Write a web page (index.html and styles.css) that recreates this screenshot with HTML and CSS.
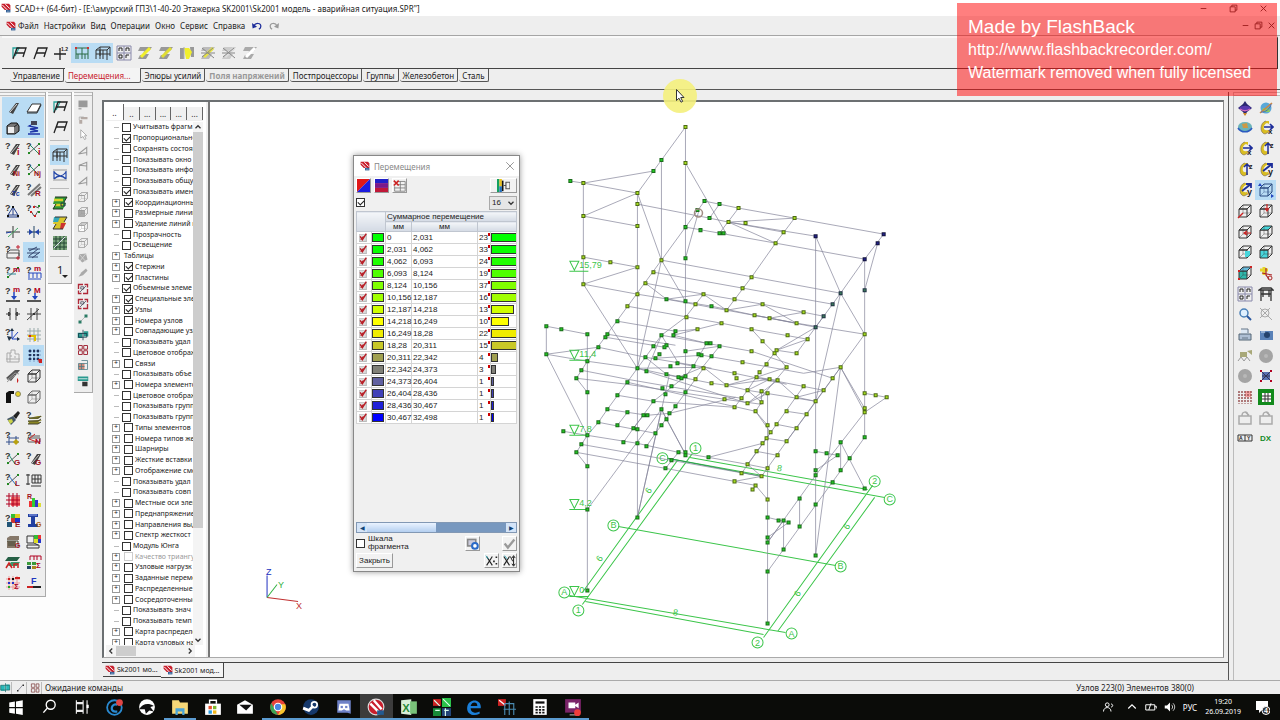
FILE: index.html
```html
<!DOCTYPE html>
<html lang="ru">
<head>
  <meta charset="UTF-8" />
  <meta name="viewport" content="width=device-width, initial-scale=1" />
  <title>SCAD++ (64-бит)</title>
  <link rel="stylesheet" href="styles.css">
</head>
<body>

  <header class="titlebar">
    <svg class="logo" data-icon="scad"></svg>
    <h1>SCAD++ (64-бит) - [E:\амурский ГПЗ\1-40-20 Этажерка SK2001\Sk2001 модель - аварийная ситуация.SPR"]</h1>
    <div class="win-buttons">
      <button aria-label="Свернуть"><svg data-icon="min"></svg></button>
      <button aria-label="Развернуть"><svg data-icon="restore"></svg></button>
      <button aria-label="Закрыть окно"><svg data-icon="close"></svg></button>
    </div>
  </header>

  <nav class="menubar">
    <svg class="logo" data-icon="scad"></svg>
    <button>Файл</button>
    <button>Настройки</button>
    <button>Вид</button>
    <button>Операции</button>
    <button>Окно</button>
    <button>Сервис</button>
    <button>Справка</button>
    <button class="arrow" aria-label="Отменить"><svg data-icon="undo"></svg></button>
    <button class="arrow" aria-label="Вернуть"><svg data-icon="redo"></svg></button>
    <div class="mdi-buttons">
      <button aria-label="Свернуть документ"><svg data-icon="min"></svg></button>
      <button aria-label="Восстановить документ"><svg data-icon="restore"></svg></button>
      <button aria-label="Закрыть документ"><svg data-icon="close"></svg></button>
    </div>
  </nav>

  <div class="toolbar" id="topBar"></div>

  <nav class="tabs">
    <button>Управление</button>
    <button class="current">Перемещения...</button>
    <button>Эпюры усилий</button>
    <button disabled>Поля напряжений</button>
    <button>Постпроцессоры</button>
    <button>Группы</button>
    <button>Железобетон</button>
    <button>Сталь</button>
  </nav>

  <div class="workspace">
    <div class="side">
      <div class="bar bar-main" id="mainBar"></div>
      <div class="bar bar-view" id="viewBar"></div>
      <div class="bar bar-small" id="smallBar"></div>
    </div>

    <div class="documents">
      <div class="doc">
        <aside class="filters">
          <div class="filter-tabs">
            <button class="current">..</button>
            <button>..</button>
            <button>...</button>
            <button>...</button>
            <button>...</button>
            <button>...</button>
          </div>
          <div class="filter-body">
            <ul class="tree" id="tree"></ul>
            <div class="vscroll">
              <svg data-icon="up"></svg>
              <div class="thumb"></div>
              <svg data-icon="down"></svg>
            </div>
          </div>
          <div class="hscroll">
            <svg data-icon="left"></svg>
            <div class="thumb"></div>
            <svg data-icon="right"></svg>
          </div>
        </aside>

        <main class="canvas">
          <svg class="model" id="model" viewBox="210 102 1012 555" preserveAspectRatio="xMinYMin slice"></svg>

          <section class="dialog">
            <div class="dialog-title">
              <svg class="logo" data-icon="scad"></svg>
              <h2>Перемещения</h2>
              <button aria-label="Закрыть панель"><svg data-icon="thinclose"></svg></button>
            </div>
            <div class="dialog-row">
              <button class="push" aria-label="Изополя"><svg data-icon="diag"></svg></button>
              <button class="push" aria-label="Градиент"><svg data-icon="grad"></svg></button>
              <button class="push" aria-label="Сброс"><svg data-icon="gridx"></svg></button>
              <button class="push wide" aria-label="Настройка шкалы"><svg data-icon="palette"></svg></button>
            </div>
            <div class="dialog-row">
              <input type="checkbox" class="check" aria-label="Все интервалы" checked />
              <div class="select">
                <select aria-label="Количество интервалов"><option>16</option></select>
                <svg data-icon="down"></svg>
              </div>
            </div>
            <div class="scale">
              <table>
                <colgroup><col class="c-on"><col class="c-color"><col class="c-from"><col class="c-to"><col class="c-count"><col class="c-bar"></colgroup>
                <thead>
                  <tr><th colspan="2" rowspan="2"></th><th colspan="4" class="group">Суммарное перемещение</th></tr>
                  <tr><th>мм</th><th>мм</th><th colspan="2"></th></tr>
                </thead>
                <tbody id="scaleRows"></tbody>
              </table>
            </div>
            <div class="blue-scroll">
              <button aria-label="Влево">◀</button>
              <div class="thumb"></div>
              <button aria-label="Вправо">▶</button>
            </div>
            <div class="dialog-row bottom">
              <label class="fragment"><input type="checkbox" class="check" /><span>Шкала фрагмента</span></label>
              <button class="push set" aria-label="Параметры"><svg data-icon="gear"></svg></button>
              <button class="push end" aria-label="Применить"><svg data-icon="ok"></svg></button>
            </div>
            <div class="dialog-row">
              <button class="push text">Закрыть</button>
              <button class="push end" aria-label="Отметить узлы"><svg data-icon="x1"></svg></button>
              <button class="push" aria-label="Отметить элементы"><svg data-icon="x2"></svg></button>
            </div>
          </section>
        </main>
      </div>

      <nav class="doc-tabs">
        <button><svg class="logo" data-icon="scad"></svg>Sk2001 мо...</button>
        <button class="current"><svg class="logo" data-icon="scad"></svg>Sk2001 мод...</button>
      </nav>
    </div>

    <div class="bar bar-right" id="rightBar"></div>
  </div>

  <footer class="status">
    <svg data-icon="s1"></svg>
    <svg data-icon="s2"></svg>
    <svg data-icon="s3"></svg>
    <span>Ожидание команды</span>
    <span class="counts">Узлов 223(0) Элементов 380(0)</span>
  </footer>

  <div class="taskbar">
    <div class="apps" id="apps"></div>
    <div class="tray">
      <svg data-icon="people"></svg>
      <svg data-icon="chevron"></svg>
      <svg data-icon="battery"></svg>
      <svg data-icon="sound"></svg>
      <span>РУС</span>
      <time>19:20<br>26.09.2019</time>
      <svg data-icon="note"></svg>
    </div>
  </div>

  <div class="watermark">
    <p class="big">Made by FlashBack</p>
    <p>http://www.flashbackrecorder.com/</p>
    <p>Watermark removed when fully licensed</p>
  </div>

  <svg class="pointer" viewBox="0 0 36 36">
    <circle cx="18" cy="18" r="17" fill="#f4f07c" fill-opacity=".9" />
    <path d="M14.500 11.500v11l2.500-2.300 2 4 1.700-.8-2-3.900h3.300z" fill="#fff" stroke="#333" />
  </svg>

  <script src="script.js"></script>
</body>
</html>
```

FILE: styles.css
```css
* {
  margin: 0; padding: 0; box-sizing: border-box;
}

body {
  height: 100vh;
  display: flex;
  flex-direction: column;
  overflow: hidden;
  background: #eeeeee;
  color: #222;
  font-family: "Noto Sans", sans-serif;
  font-size: 8px;
}

button {
  border: none;
  background: none;
  font: inherit;
  color: inherit;
}

svg {
  display: block;
  flex: none;
  width: 16px;
  height: 16px;
}

svg.logo { width: 10px; height: 10px; }

/* title and menu */
.titlebar {
  flex: none;
  height: 16px;
  display: flex;
  align-items: center;
  gap: 4px;
  padding-left: 1px;
  background: #fff;
}

h1 { font-size: 8px; font-weight: 400; white-space: nowrap; }

.win-buttons, .mdi-buttons { display: flex; margin-left: auto; }
.win-buttons svg, .mdi-buttons svg { width: 9px; height: 9px; }
.win-buttons { gap: 21px; padding-right: 12px; }
.mdi-buttons { gap: 4px; padding-right: 4px; }

.menubar {
  flex: none;
  height: 20px;
  display: flex;
  align-items: center;
  gap: 5px;
  padding-left: 6px;
  border-bottom: 1px solid #a5a5a5;
}

.menubar .logo { margin-right: -3px; }
.menubar .arrow { margin-left: 2px; }
.menubar .arrow svg { width: 10px; height: 10px; }

.toolbar {
  flex: none;
  height: 33px;
  display: flex;
  align-items: center;
  padding: 0 0 0 6px;
  margin: 0 2px;
  border-bottom: 1px solid #444;
  border-right: 1px solid #333;
  border-top: 2px solid #f9f9f9;
}

.toolbar button {
  width: 21px;
  height: 20px;
  display: grid;
  place-items: center;
}

.on { background: #b9dcf4; }

.tabs {
  flex: none;
  height: 21px;
  display: flex;
  align-items: flex-start;
  gap: 1px;
  padding-left: 10px;
  border-bottom: 1px solid #555;
}

.tabs button {
  height: 13px;
  padding: 0 3px;
  border-right: 1px solid #555;
  border-bottom: 1px solid #555;
  border-radius: 0 0 2px 3px;
  white-space: nowrap;
}

.tabs .current {
  height: 15px;
  margin-top: -1px;
  padding-right: 9px;
  background: #f4f4f4;
  color: #c8202c;
}

.tabs button:disabled { color: #999; font-weight: 700; }

/* workspace */
.workspace {
  flex: 1;
  min-height: 0;
  display: flex;
  padding-top: 2px;
}

.side {
  width: 93px;
  display: flex;
  align-items: flex-start;
  gap: 2px;
  background: #fdfdfd;
}

.bar {
  display: grid;
  padding-top: 5px;
  background: #eee;
  border-right: 1px solid #aaa;
  border-bottom: 1px solid #aaa;
  box-shadow: inset 0 1px #bbb, inset 0 3px #f4f4f4, inset 0 4px #bbb;
}

.bar button { display: grid; place-items: center; }

.bar-main {
  width: 46px;
  padding-left: 2px;
  padding-bottom: 3px;
  grid-template-columns: 21px 21px;
  grid-template-rows: repeat(8, 21px 20px 21px);
}

.bar-view {
  width: 24px;
  padding: 5px 2px 2px;
}

.bar-view button { height: 20px; }
.bar-view .line { height: 24px; margin-bottom: 4px; padding-bottom: 3px; border-bottom: 1px solid #bbb; }

.bar-small {
  width: 19px;
  padding-bottom: 3px;
  grid-template-rows: repeat(6, 15px 15px 16px) 16px;
}

.bar-small svg { width: 12px; height: 12px; }

.bar-right {
  width: 47px;
  margin-left: 4px;
  grid-template-columns: 21px 21px;
  grid-template-rows: repeat(6, 21px 20px 21px);
  align-content: start;
  border: none;
  border-left: 1px solid #bbb;
}

.documents {
  flex: 1;
  min-width: 0;
  display: flex;
  flex-direction: column;
  padding: 8px 0 0 9px;
  border-right: 1px solid #555;
}

.doc {
  flex: 1;
  min-height: 0;
  display: flex;
  margin-right: 4px;
  background: #fff;
  border: 2px solid #6c7072;
  border-right: 1px solid #888;
  border-bottom: 1px solid #aaa;
}

.filters {
  width: 106px;
  display: flex;
  flex-direction: column;
  padding: 3px 5px 0 2px;
  background: #fff;
  border-right: 2px solid #777;
  box-shadow: inset -2px 0 #eee;
}

.filter-tabs { display: flex; height: 16px; align-items: flex-end; border-bottom: 1px solid #eee; }
.filter-tabs button { flex: 1; height: 13px; background: #f0f0f0; border-right: 1px solid #666; }
.filter-tabs .current { flex: 0 0 18px; height: 16px; background: #fff; }

.filter-body { flex: 1; min-height: 0; display: flex; overflow: hidden; padding-top: 1px; }

.tree {
  flex: 1;
  min-width: 0;
  display: grid;
  grid-auto-rows: minmax(0, 1fr);
  margin-bottom: -3px;
  list-style: none;
  font-size: 7px;
}

.tree li {
  display: flex;
  align-items: center;
  white-space: nowrap;
  line-height: 10px;
}

.tree li::before {
  content: "";
  flex: none;
  width: 5px;
  height: 1px;
  margin: 0 3px 0 8px;
  background: #bbb;
}

.tree li.plus::before {
  content: "+";
  width: 6px;
  height: 6px;
  margin: 0 4px 0 6px;
  border: 1px solid #999;
  background: #fff;
  font-size: 7px;
  line-height: 4px;
  text-align: center;
}

.tree label { display: flex; align-items: center; gap: 2px; }
.tree .off { color: #999; }

.check {
  appearance: none;
  flex: none;
  width: 9px;
  height: 9px;
  background: #fff;
  border: 1px solid #333;
}

.check:checked::after {
  content: "";
  display: block;
  width: 5px;
  height: 3px;
  margin: 1px;
  border-left: 1px solid #222;
  border-bottom: 1px solid #222;
  transform: rotate(-45deg);
}

.check:disabled { border-color: #ccc; }

.vscroll { width: 10px; display: flex; flex-direction: column; background: #f4f4f4; }
.vscroll svg, .hscroll svg { width: 10px; height: 10px; }
.vscroll .thumb { flex: 0 1 396px; background: #cdcdcd; margin-bottom: auto; }
.hscroll { display: flex; align-items: center; height: 12px; margin-right: 8px; background: #f4f4f4; }
.hscroll .thumb { width: 20px; height: 10px; margin-right: auto; background: #cdcdcd; }

.canvas { flex: 1; min-width: 0; position: relative; background: #fff; overflow: hidden; }
.model { width: 100%; height: 100%; font-family: "Liberation Sans", sans-serif; font-size: 9px; }

/* displacement scale window, floats over the model */
.dialog {
  position: absolute;
  left: 143px;
  top: 53px;
  width: 167px;
  height: 417px;
  display: flex;
  flex-direction: column;
  padding: 0 2px 2px;
  background: #f0f0f0;
  border: 1px solid #888;
  box-shadow: 0 0 6px rgba(0, 0, 0, 0.4);
  font-family: "Liberation Sans", sans-serif;
}

.dialog-title {
  display: flex;
  align-items: center;
  gap: 4px;
  height: 20px;
  margin: 0 -2px 1px;
  padding: 0 4px 0 6px;
  background: #fff;
  color: #888;
}

.dialog-title h2 { font-family: "Noto Sans", sans-serif; font-size: 8px; font-weight: 400; margin-right: auto; }
.dialog-title svg { width: 10px; height: 10px; }

.dialog-row { display: flex; align-items: center; gap: 3px; height: 17px; }

.push {
  width: 15px;
  height: 15px;
  display: grid;
  place-items: center;
  background: #f2f2f2;
  border: 1px solid #fff;
  border-right-color: #999;
  border-bottom-color: #999;
}

.push svg { width: 13px; height: 13px; }
.push.wide { width: 27px; margin-left: auto; }
.push.end { margin-left: auto; }
.push.text { width: 37px; }

.select {
  display: flex;
  align-items: center;
  width: 28px;
  height: 14px;
  margin-left: auto;
  border: 1px solid #aaa;
  background: #e6e6e6;
}

.select select {
  appearance: none;
  flex: 1;
  min-width: 0;
  padding-left: 2px;
  border: none;
  background: none;
  color: #222;
  font: inherit;
}

.select svg { width: 10px; height: 10px; }

.scale { flex: 1; min-height: 0; overflow: hidden; }

table { width: 100%; table-layout: fixed; border-collapse: collapse; background: #fff; }
.c-on { width: 15px; }
.c-color { width: 14px; }
.c-from { width: 26px; }
.c-to { width: 66px; }
.c-count { width: 13px; }

th {
  height: 10px;
  font-weight: 400;
  line-height: 9px;
  background: linear-gradient(#f4f6f9, #d3dae4);
  border: 1px solid #c0c6d0;
}

th.group { text-align: left; padding-left: 1px; white-space: nowrap; }

td {
  height: 12px;
  padding: 0 0 0 1px;
  line-height: 10px;
  border: 1px solid #d4d4d4;
  white-space: nowrap;
}

td:nth-child(2), td:last-child { padding: 0; overflow: hidden; }
td svg { width: 9px; height: 9px; margin-left: 1px; }
td:nth-child(5) { background: radial-gradient(#c00 0 0) no-repeat 10px 1px / 2px 3px; }

.swatch, .bar-fill { display: block; height: 9px; border: 1px solid #333; }
.swatch { width: 12px; }

.blue-scroll { display: flex; height: 11px; margin-bottom: 1px; background: #7898bf; border: 1px solid #8298b4; }
.blue-scroll button { width: 10px; background: #d4e4f8; color: #147; font-size: 6px; line-height: 8px; }
.blue-scroll .thumb { width: 69px; margin-right: auto; background: linear-gradient(#eaf3ff, #b4cff0); }
.fragment { display: flex; align-items: center; gap: 3px; width: 106px; line-height: 8px; }
.fragment span { width: 44px; }
.dialog-row.bottom { height: 18px; }

.doc-tabs {
  height: 18px;
  display: flex;
  align-items: flex-start;
  margin-top: 4px;
  padding-left: 1px;
  border-top: 1px solid #444;
}

.doc-tabs button {
  display: flex;
  align-items: center;
  gap: 2px;
  height: 14px;
  padding: 0 3px 0 2px;
  border-bottom: 1px solid #444;
  font-size: 7px;
  white-space: nowrap;
}

.doc-tabs .current { height: 15px; border-right: 1px solid #444; background: #f4f4f4; }

.status {
  flex: none;
  height: 14px;
  display: flex;
  align-items: center;
  gap: 3px;
  border-top: 1px solid #aaa;
}

.status svg { width: 12px; height: 12px; border-right: 1px solid #bbb; }
.status .counts { margin-left: auto; padding-right: 86px; }

/* taskbar */
.taskbar {
  flex: none;
  height: 26px;
  display: flex;
  background: #0b0c09;
  color: #fff;
}

.apps { width: 589px; display: flex; }
.apps button { flex: 1; display: grid; place-items: center; border-bottom: 2px solid transparent; padding-top: 1px; }
.apps .run { border-bottom-color: #5b9bd0; }
.apps .active { background: #3c3c3c; }
.apps svg { width: 18px; height: 18px; }

.tray { display: flex; align-items: center; gap: 7px; margin-left: auto; padding-right: 10px; }
.tray svg { width: 12px; height: 12px; }
.tray svg:first-child { margin-right: 5px; }
.tray time { margin: 0 6px 0 1px; text-align: center; font-size: 7px; line-height: 10px; }
.tray svg:last-child { width: 16px; height: 16px; }

/* recorder overlay */
.watermark {
  position: absolute;
  top: 3px;
  right: 3px;
  width: 320px;
  height: 93px;
  padding: 12px 11px;
  background: rgba(255, 0, 0, 0.5);
  color: #fff;
  font: 16px/23px "Liberation Sans", sans-serif;
  white-space: nowrap;
}

.watermark .big { font-size: 19px; }

.pointer { position: absolute; left: 662px; top: 78px; width: 36px; height: 36px; }
```

FILE: script.js
```js
// small helpers for svg fragments
const p = (d, c = "#222", w = 1) => `<path d="${d}" fill="none" stroke="${c}" stroke-width="${w}"/>`;
const f = (d, c = "#222") => `<path d="${d}" fill="${c}"/>`;
const t = (x, y, s, c = "#222", size = 7) =>
  `<text x="${x}" y="${y}" fill="${c}" font-size="${size}" font-weight="bold" font-family="Liberation Sans, sans-serif">${s}</text>`;
const q = t(0, 8, "?", "#333", 9);
const node = (x, y, c) => f(`M${x - 1} ${y - 1}h2v2h-2z`, c);

const beam = f("M5 12L11 3h4L9 14z", "#444") + p("M6 12l7-8", "#ccc");
const cube = (c = "#333", face = "none", face2 = "none") =>
  `<path d="M2 6h8v8h-8z" fill="${face}" stroke="${c}"/><path d="M2 6l4-4h8l-4 4z" fill="${face2}" stroke="${c}"/>` + p("M14 2v8l-4 4", c) + p("M6 2v8h8M6 10l-4 4", c, .4);
const cross = p("M2 13L13 3", "#555") + node(3, 12, "#282") + node(13, 3, "#282");
const ring = f("M8 1C2 2 1 13 7 14l4-2-1-2c-5 2-6-5-1-7l2 1V1z", "#d9bd22") + p("M8 1C2 2 1 13 7 14l4-2", "#765", .6);
const portal = p("M2 14L6 3h9l-3 9M6 3L4 9M4 8h9", "#222", 1.3);
const sheet = (a, b) => f("M3 2h12l-3 4h-4l-1 3h5l-3 5H1l2-4h3l1-4H1z", a) + p("M4 12l9-9", b, 3);
const win4 = p("M1 1h14v14H1zM1 8h14M8 1v14", "#88a") + p("M3 6V3h3v3M10 6V3h3v3M3 10h3v3H3zM10 13v-3h3", "#222");
const frame3 = p("M1 5l4-3h10l-3 3zM1 5v9M12 5v10M15 2v9M5 2v9M5 5v9M8 5v9M1 9h14", "#333");
const grid = c => p("M1 4h14M1 8h14M1 12h14M4 1v14M8 1v14M12 1v14", c);

const icons = {
  scad: f("M1 1h12l2 3v7H6L1 6z", "#c81e2c") + p("M2 3l9 9M7 2l7 7", "#fff", 1.6) + f("M8 11h7v4H8z", "#1f4f8a") + p("M9 13h5", "#cde"),
  min: p("M3 8h10", "#333", 1.5),
  restore: p("M2 5h9v9H2zM5 5V2h9v9h-3", "#333", 1.5),
  close: p("M3 3l10 10M13 3L3 13", "#333", 1.6),
  thinclose: p("M2 2l12 12M14 2L2 14", "#777", 1.2),
  undo: p("M3 8c3-6 12-5 11 1 0 2-1 3-3 4", "#1b2b9a", 2) + f("M0 3l1 9 7-3z", "#1b2b9a"),
  redo: p("M13 8C10 2 1 3 2 9c0 2 1 3 3 4", "#999", 2) + f("M16 3l-1 9-7-3z", "#999"),
  portalT: p("M2 13V3h6l-4 8", "#2aa39a", 1.3) + portal,
  portal,
  axis: p("M1 9h12M7 3v12", "#222", 1.3) + t(8, 6, "1.2", "#222", 5),
  frames: p("M1 3h14M2 3v11M8 3v11M14 3v11M2 9h12M4 9v5M11 9v5", "#2b6a45") + node(2, 3, "#c33") + node(14, 3, "#c33"),
  frame3, win4,
  sh1: sheet("#999", "#f1ef2c"), sh2: sheet("#999", "#e0dd33"),
  sh3: f("M1 3h4v11H1zM11 2h4v10h-3z", "#999") + f("M5 3h5l3 4-3 7H7z", "#f1ef2c") + p("M5 2v12", "#aaa"),
  sh4: sheet("#bbb", "#e8e540") + p("M2 3l12 10M2 12L13 3M1 8h14", "#888"),
  sh5: sheet("#ccc", "#ddd") + p("M2 3l12 10M2 12L13 3M1 8h13", "#888"), sh6: sheet("#aaa", "#fff"),
  // main bar
  bar: f("M4 12L11 3h3L8 14z", "#444") + p("M5 12l7-8", "#ddd"),
  plate: `<path d="M1 12L6 4h9l-4 8z" fill="#fff" stroke="#333"/>` + p("M1 13h10l4-8", "#333"),
  solid: `<path d="M2 6l4-3h6l2 3v5l-4 3H2z" fill="#777" stroke="#111"/>` + f("M3 7h6v6H3z", "#eee") + p("M9 7l4-3", "#222"),
  spring: p("M5 5l-2 1 9 2-8 1 8 2-8 1M2 14h12", "#2036a8", 1.3) + f("M5 1h6v4H5z", "#445"),
  qi: q + beam + t(12, 14, "i", "#b00020", 9), qxi: q + cross + p("M4 4l9 9", "#2a8a6a") + t(12, 14, "i", "#b00020", 9),
  qn: q + beam + t(8, 14, "Ni", "#a01020", 7), qnj: q + cross + p("M4 4l9 9", "#2a8a6a") + t(8, 14, "Nj", "#a01020", 7),
  qt: q + beam + t(7, 14, "Тс", "#203c9c", 7), qr: q + p("M2 13L14 2M5 14L15 5", "#777", 2) + t(9, 14, "R", "#a01020", 8),
  qsup: q + p("M8 4l-5 8h10zM2 14h12M8 4v8", "#24408c") + node(8, 4, "#111") + node(3, 13, "#111") + node(13, 13, "#111"),
  qlink: q + p("M5 8l3 5M8 3l5 2M12 8l-3 5", "#555") + node(8, 4, "#c22") + node(13, 3, "#282") + node(5, 9, "#c22") + node(9, 13, "#c22") + node(13, 9, "#282"),
  cr1: p("M1 8h14M8 2v12", "#333") + p("M3 13L13 4", "#4a6") + p("M1 9l5-1", "#24a"),
  cr2: p("M1 8h14M8 2v12", "#246") + f("M3 5l4 3-4 3zM13 5l-4 3 4 3z", "#24a"),
  plus1: q + p("M2 9h12v5H2zM2 9l3-3h9v6", "#555") + p("M11 3h4M13 1v4M11 14h4M13 12v4", "#c02030"),
  waves: p("M2 5h12M1 9h12M2 13h10M3 7l8-4M3 12l9-7M6 14l8-6", "#34466f"),
  qm1: q + cross + t(8, 7, "m", "#b00020", 8) + p("M2 9h9", "#2a8a9a"), qm2: q + t(8, 6, "m", "#b00020", 8) + p("M3 8h12v5M3 8v5M7 8v5M11 8v5M2 14h13", "#2346c0"),
  qm3: q + t(8, 6, "m", "#b00020", 8) + p("M9 6v6", "#2346c0", 1.5) + f("M6 10h6l-3 4z", "#2346c0") + p("M1 15h14", "#222", 1.5),
  qm4: q + t(8, 7, "M", "#b00020", 8) + p("M9 7v6", "#2346c0", 1.5) + f("M6 10h6l-3 4z", "#2346c0") + p("M1 15h14", "#222", 1.5),
  dim1: p("M1 8h5M10 8h5M5 2v12M11 2v12", "#444") + p("M4 6v4M12 6v4", "#444", 2),
  dim2: p("M1 8h14M5 2v12M11 2v12M1 14L13 3", "#444") + node(8, 8, "#333"),
  axes: q + p("M7 3v9h7M7 12l6-7", "#2346c0") + f("M5 4l2-3 2 3zM12 10l3 2-3 2zM2 9l5 1-3 4z", "#234"),
  lgrid: grid("#9aa") + p("M2 9h7v5", "#e0c000", 2) + node(4, 9, "#c22"),
  house: p("M2 14V5h4V2h4v4h4v8zM5 8h2M9 9h2M1 11h14M5 5v9", "#aaa"),
  dots: `<path d="M2 3h13M2 7h13M2 11h13M4 1v13M8 1v13M12 1v13" fill="none" stroke="#46669c" stroke-dasharray="1.500 1"/>` + [3, 7, 11].map(y => [4, 8, 12].map(x => node(x, y, "#23355c")).join("")).join("") + f("M12 11h4v4h-3z", "#c22"),
  slab: f("M1 10L10 2h5L6 13z", "#555") + p("M2 12l8-7 4 1M2 14l8-7", "#999") + f("M12 10a3 3 0 010 5z", "#c22"),
  wire: cube("#333"), wire2: cube("#666"),
  lampb: f("M1 4l3-2h5v3H6v9H1z", "#111") + `<circle cx="13" cy="5" r="2.500" fill="#e8d222" stroke="#886"/>`,
  brush: f("M2 9l6-3 3 4-5 5z", "#456") + f("M8 6l5-5 2 2-4 6z", "#222") + f("M3 10l4-1 1 3-3 2z", "#cad24a"),
  layers: q + f("M3 8l9-2h4l-4 3H3zM2 11l10-1h4l-4 2H2zM2 14h10l3-2H3z", "#8a8624") + p("M3 8h9l3-2M2 11h10l3-2M2 14h10l3-2", "#443"),
  qgrid: q + p("M4 6v9M1 12h13M11 6v8M4 8h10", "#34508c") + f("M11 9l3 3-3 3-3-3z", "#b9a210"),
  qN: q + p("M2 8h12v4H2zM4 6h10", "#555") + p("M3 9l6-5M3 9l8 3", "#c22") + t(9, 14, "N", "#b00020", 8),
  qG: q + cross + p("M4 4l6 9", "#2a8a6a") + t(9, 14, "G", "#a01020", 8), qG2: q + beam + t(9, 14, "G", "#a01020", 8),
  qL: q + cross + p("M4 4l7 9", "#2a6ac0") + t(10, 14, "L", "#a01020", 8), ruler: p("M2 2v11M0 3h4M0 12h4M5 14h10M6 3h9v8H6zM9 3v8M12 3v8M6 7h9", "#333"),
  redgrid: f("M6 5h9v9H6z", "#f06868") + grid("#b00020"),
  bars: f("M3 9h3v6H3z", "#e33") + f("M6 6h3v9H6z", "#3c3") + f("M9 8h3v7H9z", "#33c") + f("M12 11h3v4h-3z", "#dd3") + t(1, 7, "R", "#a01020", 7),
  qE: q + f("M6 1h4v4H6z", "#3b3") + f("M10 1h5v4h-5z", "#dc2") + f("M6 5h4v5H6z", "#c33") + f("M10 5h5v5h-5z", "#23c") + f("M2 9h5v5H2z", "#257") + t(10, 14, "E", "#a01020", 8),
  ibeam: f("M2 1h10v3H9v7h3v3H2v-3h3V4H2z", "#2240a0") + p("M3 2h8", "#9ae") + t(10, 14, "G", "#b06010", 7),
  chest: f("M2 4l3-2h9v4H2zM2 7h9v7H2z", "#86786a") + p("M3 9h7M3 11h7M2 7h11v6", "#443") + t(10, 14, "G", "#a01020", 7),
  color4: p("M1 2h7v7H1zM1 11h12v3H1zM8 9l4 2", "#333") + f("M8 1h4v4H8z", "#3b3") + f("M12 1h3v4h-3z", "#e33") + f("M8 5h4v4H8z", "#dd2") + f("M12 5h3v4h-3z", "#23c"),
  slabs: f("M3 3h12l-3 4H0z", "#255f45") + f("M6 8h9l-3 4H3z", "#3a9a6a") + p("M1 14l3-5 3 5M9 14v-4h4v4", "#c22", 1.5),
  sum1: f("M1 8h4v3H1zM6 8h4v3H6z", "#3a9a3a") + f("M1 12h4v3H1z", "#246") + f("M6 12h4v3H6z", "#a82") + p("M4 6V2h11v4M8 2v4M11 2v4", "#b00020") + t(10, 14, "Σ", "#b00020", 8),
  sum2: grid("#e99") + node(4, 4, "#c22") + node(8, 8, "#23c") + node(4, 12, "#2a2") + node(4, 8, "#23c") + node(8, 4, "#111") + p("M10 3h5", "#c22", 2) + t(9, 14, "Σ", "#b00020", 8),
  force: t(5, 9, "F", "#2036c0", 9) + p("M1 12h6", "#c22", 2) + p("M7 12h8", "#222", 2),
  bend: p("M2 4v8M14 4v8M2 5c5 5 8 5 12 0M2 12c4-4 8-4 12 0", "#2346a8", 1.2) + p("M1 3h14M1 13h14", "#999"),
  yg1: f("M3 2h12l-3 5 2 1-3 6H1l3-5H1z", "#2f9a38") + p("M2 5h9M3 10h8", "#d7d028", 2.5) + p("M9 8h4v3H9z", "#234") + p("M3 2h12l-3 5M11 14H1l3-5", "#232"),
  yg2: f("M3 2h12l-3 5 2 1-3 6H1l3-5H1z", "#d8c62a") + f("M2 2h6l-2 5H1z", "#36a8b8") + f("M9 8h5l-3 6H8z", "#c33") + p("M3 2h12l-3 5M11 14H1l3-5", "#333"),
  yg3: f("M1 1h14v14H1z", "#7ba37b") + grid("#243") + p("M2 13L13 2", "#dde"),
  one: `<text x="5" y="11" font-size="11" fill="#222">1</text>` + f("M10 12h6l-3 3z"),
  // gray column
  g1: f("M2 2h12v9H2z", "#999") + f("M2 12h4v2H2z", "#aaa"), g2: f("M5 4h9v3H5zM3 8h4v5H3z", "#b5aaa5") + p("M3 8V4h6", "#aaa"),
  g3: `<path d="M5 1v11l3-2 2 4 2-1-2-4h3z" fill="#fff" stroke="#999"/>`,
  g4: p("M2 12L13 3v11M2 12l11-2", "#999", 1.4), g5: p("M3 14V7l10-4v11M3 7l10 1", "#999", 1.4),
  g6: cube("#999"), g7: cube("#999", "#aaa"), g8: cube("#999", "#fff", "#ccc"), g9: f("M3 3l9-1 2 8-7 4-5-5z", "#aaa") + p("M3 3l9 10M12 2L4 12", "#ddd"),
  g10: f("M2 13l4-6 6-5 2 3-6 6z", "#aaa"), g11: p("M2 8V2h6M14 8v6H8M10 2h4v4M2 10v4h4", "#b02838", 1.8) + p("M4 12l8-8M5 5h4v3H5z", "#445"),
  g12: p("M3 13L12 4", "#aaa") + f("M2 10h4v4H2zM10 2h4v4h-4z", "#2a7a64"),
  g13: f("M1 5h6v7H1zM9 3h6v7H9z", "#2a9a90") + p("M8 1v14M2 6h11v5H2z", "#134"), g14: p("M2 2h5v5H2zM9 2h5v5H9zM2 9h5v5H2zM9 9h5v5H9z", "#a02838", 1.3),
  g15: f("M2 6h8v8H2z", "#cc8a7a") + p("M2 6h12v8H2zM6 2h8v4M6 6v8M2 10h8", "#4a7a84"), g16: f("M1 2h14v6H1z", "#2a9a90") + f("M7 9h7v6H7z", "#333") + p("M2 5h12", "#fff"),
  // right bar
  top: f("M8 1l2 3 5 4-5 4-2 3-2-3-5-4 5-4z", "#2b2870") + f("M2 8c3-3 9-3 12 0-3 3-9 3-12 0z", "#5a3ab0") + p("M3 9c3 2 7 2 10 0", "#d46ac0", 1.5) + f("M6 13h4l-2 3z", "#c82"),
  planet: `<circle cx="8" cy="8" r="5.500" fill="#5aa8d8"/>` + f("M4 9c3-3 6 2 7-2l1 5H6z", "#8c6") + p("M2 13L14 3", "#c84", 1.6) + p("M3 12c4 1 10-4 10-8", "#4a6ab0"),
  planet2: `<ellipse cx="8" cy="7" rx="7" ry="5" fill="#6bb3b8"/>` + f("M5 4l5-1 1 5H6z", "#c94") + p("M1 8c3 5 11 5 14 0", "#2a5ac0", 1.6),
  rx: ring + p("M6 7h9M12 4l3 3-3 3", "#1c2d9a", 1.6) + t(10, 14, "x", "#222", 8), rz: ring + p("M10 13V2M7 5l3-3 3 3", "#1c2d9a", 1.5) + t(12, 7, "z", "#222", 7),
  ry: ring + p("M5 9l9-7M9 2h5v4", "#1c2d9a", 1.8) + t(10, 13, "y", "#222", 9),
  rot: cube("#2a4a80") + f("M0 4l2-3 2 3zM13 12l3 2-3 2z", "#2346c0"),
  v1: cube() + p("M1 15l5-5", "#c22", 1.4), v2: cube() + p("M9 1v6M7 5l2 3 2-3", "#c22", 1.2), v3: cube() + p("M14 9H8M10 7L7 9l3 2", "#c22", 1.2),
  v4: cube("#333", "none", "#48d6dc"), v5: cube() + f("M8 7h5v4l-2 2H8z", "#48d6dc"), v6: cube("#333", "#48d6dc"), v7: cube("#333", "#2fb8ac", "#6bd") + node(2, 14, "#c22") + node(14, 2, "#c22") + node(2, 6, "#c22"),
  cut: p("M2 5h8M6 2v8", "#e6d62a", 3) + p("M8 3v7l3 4M4 8l10 2", "#a22", 1.2) + `<circle cx="12" cy="13" r="2" fill="none" stroke="#a22"/>`,
  table: p("M1 4l3-2h9l2 2zM3 4v11M13 4v11M5 4v7M11 4v7M3 8h10", "#333", 1.3),
  find: `<circle cx="7" cy="7" r="4" fill="#dff0ff" stroke="#4a80b8" stroke-width="1.500"/>` + p("M10 10l4 4", "#2a58a0", 2),
  find2: `<circle cx="7" cy="7" r="4" fill="none" stroke="#aaa"/>` + p("M10 10l4 4M2 2l11 11M12 2L2 12", "#aaa"),
  print: f("M4 2h7l1 5H4z", "#dde8f4") + `<path d="M2 7h12v6H2z" fill="#aebfd4" stroke="#567"/>` + p("M5 11h6M4 2h7v4", "#678"),
  cam: f("M2 4h13v9H2z", "#5a82b8") + `<circle cx="9" cy="8" r="3" fill="#24426c"/>` + p("M3 5h4", "#cde"),
  film: f("M3 4h7v5H3zM10 3l5-1v5z", "#a8a878") + p("M1 13l3-4 3 4 3-4 3 4", "#999"),
  disc: `<circle cx="8" cy="8" r="7" fill="#a4a4a4"/><circle cx="8" cy="8" r="2" fill="#b8b8b8"/>`,
  box: f("M4 4h8v8H4z", "#5a70b0") + p("M2 2l12 12M14 2L2 14M4 8h8", "#335") + [[3, 3], [13, 3], [3, 13], [13, 13]].map(a => node(a[0], a[1], "#b00020")).join(""),
  rgrid: f("M8 2h6v6H8z", "#f3a0a0") + `<path d="M2 2v13M5 2v13M8 2v13M11 2v13M14 2v13M1 3h14M1 6h14M1 9h14M1 12h14" fill="none" stroke="#955" stroke-dasharray="2 1"/>`,
  ggrid: f("M0 0h16v16H0z", "#128a1c") + f("M4 4h9v9H4z", "#fff") + p("M4 7h9M4 10h9M7 4v9M10 4v9", "#333"),
  bag: p("M2 6h12v8H2zM5 6c0-5 5-5 6-1M9 3l3 2", "#aaa", 1.5),
  ay: p("M1 5h14v6H1zM8 5v6", "#333") + t(2, 10, "A", "#222", 5) + t(10, 10, "Y", "#222", 5),
  dx: t(2, 11, "DX", "#158a28", 8),
  // scrollbars
  up: p("M4 10l4-4 4 4", "#333", 2), down: p("M4 6l4 4 4-4", "#333", 2), left: p("M10 4L6 8l4 4", "#333", 2), right: p("M6 4l4 4-4 4", "#333", 2),
  // dialog
  on: f("M0 2h14v14H0z", "#bbb") + f("M1 3h11v11H1z", "#ddd") + p("M2 6l4 6 7-11", "#b81c24", 2.5) + p("M3 12l5-6", "#b81c24", 2),
  diag: f("M0 0h16L0 16z", "#e01818") + f("M16 0v16H0z", "#1c1ce0"),
  grad: f("M0 0h16v5H0z", "#2020c8") + f("M0 5h16v6H0z", "#7a1a8a") + f("M0 11h16v5H0z", "#c01838"),
  gridx: p("M5 3h10M5 7h10M2 11h13M2 15h13M9 3v12M2 9v6M15 3v12", "#777") + p("M1 2l6 6M7 2L1 8", "#c22", 2),
  palette: f("M0 0h3v16H0z", "#14a060") + f("M3 0h3v9H3z", "#e8c020") + f("M3 9h3v7H3z", "#2070c0") + f("M6 2h2v13H6z", "#111") + p("M8 8h3M11 4h5v8h-5z", "#555", 1.4),
  gear: f("M1 2h12v10H1z", "#888") + f("M3 4h8v6H3z", "#ccd") + `<circle cx="11" cy="11" r="3.500" fill="#fff" stroke="#2a6ac8" stroke-width="2.500"/>`,
  ok: p("M2 8l4 5 8-10", "#9a9a9a", 2.8),
  x1: p("M2 3l7 11M9 3L2 14", "#222", 1.4) + p("M1 2l3 4", "#2ab") + f("M10 8h2v2h-2zM13 3h2v2h-2zM13 11h2v2h-2z"),
  x2: p("M1 3l7 11M8 3L1 14", "#222", 1.4) + p("M2 2l3 4", "#2ab") + p("M13 3v11M11 5l2-3 2 3M11 12l2 3 2-3M9 3l3 6", "#222", 1.2),
  s1: f("M1 4h6v8H1zM9 3h5v8H9z", "#28b8b8") + p("M8 1v13M1 4h13v7H1z", "#166"), s2: p("M4 12l7-8", "#667") + node(4, 12, "#222") + node(12, 4, "#222"), s3: p("M2 2h5v5H2zM9 2h4v5H9zM2 9h5v5H2zM9 9h4v5H9z", "#733"),
  // taskbar
  win: f("M2 4l5-1v5H2zM8 3l6-1v6H8zM2 9h5v5l-5-1zM8 9h6v6l-6-1z", "#fff"),
  search: `<circle cx="9.500" cy="6" r="4" fill="none" stroke="#fff" stroke-width="1.200"/>` + p("M6.500 9L3 13", "#fff", 1.3),
  tview: p("M3 5h6v6H3zM3 2v2h6V2M3 14v-2h6v2M12.500 2v12", "#eee") + f("M12 6h2v3h-2z", "#fff"),
  ccl: `<circle cx="7.500" cy="8.500" r="6.500" fill="none" stroke="#2a8ad0" stroke-width="1.600"/>` + p("M10 6c-5-2-7 6-2 6h2", "#2a8ad0", 2) + `<circle cx="12" cy="4" r="3" fill="#e04545"/>`,
  fox: `<circle cx="8" cy="8" r="7" fill="#fff"/>` + f("M1 10c3-5 8-6 13-3l-3 1 3 4-4-1-3 3-1-4z", "#111"),
  folder: f("M1 2h6l1 2h7v10H1z", "#f5d778") + f("M4 9h8v6h-2v-3H6v3H4z", "#4aa4d8"),
  store: f("M1 5h14v10H1z", "#fff") + p("M5 5V2h6v3", "#fff", 1.3) + f("M4 7h3v3H4z", "#e8502c") + f("M8 7h3v3H8z", "#7cb82f") + f("M4 11h3v3H4z", "#2a9ce0") + f("M8 11h3v3H8z", "#f4b81c"),
  mail: f("M1 6l7-4 7 4v8H1z", "#fff") + f("M3 6h11l-5 5z", "#111"),
  chrome: `<circle cx="8" cy="8" r="7" fill="#e8433a"/>` + f("M2 4.500L8 15A7 7 0 012 4.500z", "#3aa655") + f("M14.500 5.500A7 7 0 018 15L11 9V5.500z", "#f6c52c") + `<circle cx="8" cy="8" r="3.300" fill="#4a86e0" stroke="#fff"/>`,
  steam: `<circle cx="8" cy="8" r="7" fill="#16386a"/><circle cx="11" cy="6" r="2.500" fill="none" stroke="#fff" stroke-width="1.500"/>` + p("M1 9l5 2 4-4", "#fff", 2.5),
  discord: f("M2 2h12v12l-3-1H2z", "#6f82c8") + f("M4 5h8l1 6h-3l-2-1-2 1H3z", "#fff") + node(6, 8, "#6f82c8") + node(10, 8, "#6f82c8"),
  scadround: `<circle cx="8" cy="8" r="7" fill="#c81e2c" stroke="#ddd"/>` + p("M3 5l8 8M6 2l7 8", "#fff", 2.2) + f("M9 11h6v4H9z", "#245a90"),
  excel: f("M1 2l9-1v14l-9-1z", "#d9efd9") + f("M9 3h6v11H9z", "#79c279") + t(2, 12, "X", "#2a8a3a", 10),
  quad: f("M0 1h7v6H0z", "#c22") + f("M8 0h8v8H8z", "#2bc24a") + f("M0 9h7v7H0z", "#188a38") + f("M8 9h8v7H8z", "#247") + p("M1 2l5 5M9 1l6 6M2 11h4M10 11h4M11 9v7", "#dfe"),
  edge: `<path d="M14 9H5c0 4 5 5 8 3v2C7 17 1 14 2 8c1-8 13-8 12 1z" fill="#1b7fd8"/>` + f("M5 7h6c0-4-5-4-6 0z", "#0b0c09"),
  scad2: f("M0 1h7v6H0z", "#c22") + p("M1 2l5 4", "#fff") + p("M6 5h8v10M6 5v10M10 3v12M5 10h11M14 8v7", "#4a8ab0"),
  calc: f("M2 1h12v14H2z", "#fff") + f("M4 3h8v2H4z", "#111") + `<path d="M4 8h8M4 10.500h8M4 13h8" stroke="#111" stroke-width="1.500" stroke-dasharray="2 1"/>`,
  rec: f("M1 1h14v12H1z", "#7a2468") + f("M4 4h6v5H4zM10 6l3-2v5l-3-2z", "#fff") + p("M5 15h6", "#aaa") + `<circle cx="12" cy="13" r="3" fill="#f03c3c"/>`,
  people: `<circle cx="7" cy="5" r="2.500" fill="none" stroke="#fff" stroke-width="1.300"/>` + p("M2 14c0-7 10-7 10 0M12 4c3 0 3 4 0 4", "#fff", 1.3),
  chevron: p("M3 10l5-5 5 5", "#fff", 1.5), battery: p("M1 5h12v7H1zM13 7h2v3M5 12l3-9", "#fff", 1.3), sound: f("M1 6h3l4-4v12L4 10H1z", "#fff") + p("M10 5c2 2 2 4 0 6M12 3c3 3 3 7 0 10", "#fff"),
  note: f("M2 2h12v9H8l-3 3v-3H2z", "#fff") + `<circle cx="12" cy="11.500" r="4" fill="#333" stroke="#fff"/>` + t(10, 14, "4", "#fff", 7)
};

document.querySelectorAll("svg[data-icon]").forEach(svg => {
  svg.setAttribute("viewBox", "0 0 16 16");
  svg.innerHTML = icons[svg.dataset.icon];
});

// after a name: * pressed, _ line under it, . running app, ! active app
function fillBar(id, names) {
  document.getElementById(id).innerHTML = names.split(" ").map(n => {
    const name = n.replace(/[*_.!]/g, "");
    const cls = (n.includes("*") ? "on " : "") + (n.includes("_") ? "line " : "") +
      (n.includes(".") ? "run " : "") + (n.includes("!") ? "active" : "");
    return `<button class="${cls.trim()}" aria-label="${name}"><svg viewBox="0 0 16 16">${icons[name]}</svg></button>`;
  }).join("");
}

fillBar("topBar", "portalT portal axis frames* frame3* win4 sh1 sh2 sh3 sh4 sh5 sh6");
fillBar("mainBar", "bar* plate* solid* spring* qi qxi qn qnj qt qr qsup qlink cr1 cr2 plus1 waves* qm1 qm2 qm3 qm4 dim1 dim2 axes lgrid house dots* slab wire lampb wire2 brush layers qgrid qN qG qG2 qL ruler redgrid bars qE ibeam chest color4 slabs sum1 sum2 force");
fillBar("viewBar", "portalT portal_ frame3* bend_ yg1 yg2 yg3_ one");
fillBar("smallBar", "g1 g2 g3 g4 g5 g4 g6 g7 g8 g6 g9 g10 g11 g11 g12 g13 g14 g15 g16");
fillBar("rightBar", "top planet planet2 rx rx rz rz ry ry rot* v1 v2 v3 v4 v5 v6 v7 cut win4 table find find2 print cam film disc disc box rgrid ggrid bag bag ay dx");
fillBar("apps", "win search tview ccl fox folder. store mail chrome. steam. discord. scadround.! excel. quad. edge. scad2. calc. rec.");

// filter tree: + expandable, v checked, # no checkbox, - disabled
const filters = [
  "Учитывать фрагм", "v Пропорционально", "Сохранять состоя", "Показывать окно", "Показывать инфо",
  "Показывать общу", "v Показывать имен", "+v Координационны", "+ Размерные линии", "+ Удаление линий н",
  "Прозрачность", "Освещение", "+# Таблицы", "+v Стержни", "+v Пластины", "v Объемные элеме",
  "+v Специальные эле", "+v Узлы", "+ Номера узлов", "+ Совпадающие узл", "Показывать удал",
  "Цветовое отображ", "+ Связи", "Показывать объе", "+ Номера элементо", "Цветовое отображ",
  "Показывать групп", "Показывать групп", "+ Типы элементов", "+ Номера типов же", "+ Шарниры",
  "+ Жесткие вставки", "+ Отображение сме", "Показывать удал", "Показывать совп",
  "+ Местные оси элем", "+ Преднапряжение", "+ Направления выд", "+ Спектр жесткост", "Модуль Юнга",
  "+- Качество триангу", "+ Узловые нагрузк", "+ Заданные переме", "+ Распределенные", "+ Сосредоточенные",
  "Показывать знач", "Показывать темп", "+ Карта распределе", "+ Карта узловых на"
];

document.getElementById("tree").innerHTML = filters.map(line => {
  const [, flags, text] = line.match(/^(?:([+v#-]+) )?(.*)$/);
  const has = c => (flags || "").includes(c);
  const box = has("#") ? "" : `<input type="checkbox" class="check"${has("v") ? " checked" : ""}${has("-") ? " disabled" : ""}>`;
  return `<li class="${has("+") ? "plus" : ""}"><label class="${has("-") ? "off" : ""}">${box}${text}</label></li>`;
}).join("");

// displacement scale
const limits = "0 2,031 4,062 6,093 8,124 10,156 12,187 14,218 16,249 18,28 20,311 22,342 24,373 26,404 28,436 30,467 32,498".split(" ");
const counts = [23, 33, 24, 19, 37, 16, 13, 10, 22, 15, 4, 3, 1, 1, 1, 1];
const colors = ["#0f0", "#08ff00", "#20ff00", "#50ff00", "#80ff00", "#a0ff00", "#d0ff00", "#fcff00", "#f0ec00", "#c8c828", "#a0a050", "#808078", "#6060a0", "#4040b8", "#2020d8", "#0000ff"];

document.getElementById("scaleRows").innerHTML = counts.map((n, i) => `<tr>
  <td><svg viewBox="0 0 16 16">${icons.on}</svg></td>
  <td><span class="swatch" style="background:${colors[i]}"></span></td>
  <td>${limits[i]}</td><td>${limits[i + 1]}</td><td>${n}</td>
  <td><span class="bar-fill" style="background:${colors[i]};width:${Math.max(3, Math.round(n * 1.8))}px"></span></td>
</tr>`).join("");

// structural model
const members = [
  // left tower
  "570,181 583,183 637,193 661,160 685,127 685,454", "583,183 653,171", "583,183 583,284 637,294", "637,193 637,517", "583,216 637,193", "583,216 637,226",
  "583,257 610,262 637,267 583,284 637,368", "661,160 661,260", "637,193 661,260 685,301", "637,204 709,218 728,222 815,236",
  "546,354 546,326 587,334 587,590", "546,354 598,347", "546,354 587,361 637,368 678,377", "546,354 587,435",
  "661,260 587,361 576,378 587,392", "661,260 637,368", "661,260 704,201", "685,163 726,234", "685,258 698,212", "685,227 719,233 775,243 864,259",
  "704,201 738,208 794,218 883,234 864,259 840,293 815,327", "738,208 719,233", "719,204 709,218", "728,222 794,218 775,243 751,277 726,310 703,294", "728,222 783,232", "728,222 775,243",
  "815,236 815,555", "815,236 840,293 864,334", "877,243 864,290", "864,259 864,437", "840,293 815,401", "840,367 815,555",
  // floors
  "661,260 840,293", "653,272 832,304", "645,283 703,294 762,304 823,316", "637,294 711,306 754,315 796,323 864,334", "627,306 721,323 751,329 807,339",
  "617,321 675,331 697,329 721,323", "605,337 664,347", "607,334 675,345", "598,347 645,357 711,368", "645,283 666,299 703,294 685,317 661,335 637,368",
  "666,299 726,310 762,304 796,323 754,315", "726,310 769,318 815,327 776,350 759,372 747,390 734,407", "803,312 769,318", "751,329 762,341 774,353 786,367",
  "807,339 776,350 796,353 823,316", "673,335 697,329", "673,335 706,343 751,351 832,378", "661,335 706,343", "685,351 719,346", "655,358 702,355 742,362 803,373 840,367",
  "719,346 702,367 678,377", "706,343 693,366 685,376", "637,368 703,367 734,373 786,384", "645,357 666,374 711,383 726,385 747,390 815,401",
  "703,367 726,385 756,377 786,367", "726,385 769,379 747,390 761,402", "756,377 777,380 796,397 823,390 761,378", "646,371 661,335 678,363 693,366",
  "581,370 627,379 685,389 741,398", "576,378 627,384 724,399 761,404", "637,368 747,403 767,393", "627,382 724,404 755,411 767,425", "617,395 653,401 734,407",
  "607,409 647,415 669,413", "598,422 655,433", "607,409 598,422 587,435 576,452 587,466", "637,368 607,409", "627,412 617,425", "643,415 633,428 623,442",
  "685,376 653,401 633,428", "703,368 675,406 655,433 646,446", "840,367 806,414 786,441 761,476 734,481", "840,367 864,408", "864,334 840,367 815,401 786,441",
  "777,380 747,403", "786,367 759,399", "803,386 776,424 747,464", "786,411 806,414", "776,424 796,428", "766,438 786,441", "756,451 777,455", "747,464 767,468",
  "796,397 815,401", "755,411 770,432 766,438 741,473", "761,391 761,402 755,411", "669,413 735,397",
  "661,409 685,454", "661,409 587,509", "661,409 666,419 685,454", "661,409 637,517", "669,374 637,517",
  "563,431 587,435 637,443 678,452 708,457 762,443", "581,444 671,460 761,476", "576,452 665,468 734,481 755,485 767,499", "678,452 665,468", "708,457 747,464 761,476",
  // right legs
  "767,393 767,623", "864,393 886,397 864,412 815,475 767,542", "864,437 849,458 767,571", "815,451 837,455 815,470", "840,442 840,470", "840,442 864,488",
  "799,498 799,526", "767,517 788,522 767,537", "783,520 783,549", "783,520 767,542", "864,412 840,367"
];

const greenNodes = "570,181 661,160 653,171 685,258 704,201 697,210 685,227 700,230 719,204 709,218 719,233 723,233 666,299 685,301 711,306 546,326 561,329 587,334 546,354 587,361 581,370 576,378 587,392 607,334 605,337 598,347 617,321 661,335 653,346 666,345 664,347 659,354 655,358 645,357 637,368 646,371 670,366 677,363 685,351 693,366 698,354 701,355 711,356 706,343 710,343 666,374 678,377 681,378 685,376 675,331 673,335 719,346 627,382 617,395 607,409 598,422 627,412 617,425 643,415 647,415 633,428 637,429 653,401 665,394 662,388 671,386 675,406 669,413 661,409 666,419 661,425 655,433 685,392 623,442 637,443 646,446 563,431 587,435 581,444 576,452 587,466 587,509 587,590 637,517 678,452 685,452 685,455 708,457 671,460 665,468 815,451 826,453 837,455 840,442 864,437 849,458 840,470 815,470 815,475 832,482 864,488 815,504 799,498 799,526 767,517 778,520 783,520 788,522 767,537 767,542 783,549 767,571 767,623 815,555";
const limeNodes = "685,127 685,163 583,183 637,193 637,204 583,216 637,226 583,257 610,262 637,267 583,284 637,294 661,260 653,272 645,283 627,306 703,294 695,304 686,317 697,329 738,208 794,218 728,222 745,223 783,232 775,243 751,277 742,288 734,299 726,310 762,304 754,315 769,318 803,312 796,323 864,334 721,323 751,329 787,335 807,339 762,341 776,350 774,353 796,353 786,367 766,364 751,351 742,362 734,373 736,378 759,372 756,377 769,379 777,380 703,368 711,383 695,379 726,385 747,390 761,391 767,393 803,386 796,397 823,390 832,378 840,367 815,401 761,402 741,398 747,403 755,411 724,399 734,407 786,411 806,414 776,424 796,428 767,425 770,432 766,438 762,443 756,451 747,464 767,468 741,473 761,476 755,485 752,489 767,499 734,481 786,441 777,455 864,393 875,395 886,397 864,408 864,412";
const tealNodes = "840,293 832,304 823,316 815,327 864,290";
const navyNodes = "883,234 877,243 864,259 815,236";

const squares = (list, edge, fill) => {
  const d = list.split(" ").map(n => `M${n}h.01`).join("");
  return `<path d="${d}" stroke="${edge}" stroke-width="4" stroke-linecap="square"/><path d="${d}" stroke="${fill}" stroke-width="2" stroke-linecap="square"/>`;
};

const axisLines = "M569 595L785 632M585 601L763 634M582 592L677 460M582 604L692 453M618 526L835 565M667 458L884 497M688 457L867 489M763 637L872 485M777 631L874 497";
const bubbles = [[564, 592, "A"], [578, 610, "1"], [613, 525, "B"], [662, 458, "C"], [695, 448, "1"], [874, 481, "2"], [889, 499, "C"], [840, 566, "B"], [791, 633, "A"], [757, 642, "2"]];
const spans = [[648, 490, "6", -55], [599, 558, "6", -55], [675, 612, "8", 10], [779, 468, "8", 10], [846, 526, "6", -55], [797, 593, "6", -55]];
const levels = [[271, "15,79"], [360, "11,4"], [435, "7,8"], [509, "4,2"], [596, "0"]];

document.getElementById("model").innerHTML =
  p(axisLines, "#3cc54a") + p("M667 458L761 476", "#2a9a50") +
  bubbles.map(([x, y, s]) => `<circle cx="${x}" cy="${y}" r="5.500" fill="none" stroke="#3cc54a"/><text x="${x}" y="${y + 3}" fill="#3cc54a" text-anchor="middle">${s}</text>`).join("") +
  spans.map(([x, y, s, a]) => `<text x="${x}" y="${y + 3}" fill="#3cc54a" text-anchor="middle" transform="rotate(${a} ${x} ${y})">${s}</text>`).join("") +
  members.map(m => `<polyline points="${m}" fill="none" stroke="#84849a" stroke-width=".7"/>`).join("") +
  levels.map(([y, s]) => p(`M569 ${y}h19M569.500 ${y - 10}h9l-4.500 9z`, "#3cc54a") + `<text x="579" y="${y - 3}" fill="#3cc54a">${s}</text>`).join("") +
  squares(greenNodes, "#1c6a1c", "#22c822") + squares(limeNodes, "#4c6a14", "#a8e020") +
  squares(tealNodes, "#234", "#3a7a5a") + squares(navyNodes, "#14143c", "#22228a") +
  `<circle cx="698" cy="213" r="4" fill="none" stroke="#a08c84" stroke-width="1.500"/>` +
  p("M267 597V575", "#2030c0") + p("M267 597L298 601", "#c03030") + p("M267 597L277 584", "#30b040") +
  `<text x="266" y="575" fill="#2030c0">Z</text><text x="278" y="588" fill="#30b040">Y</text><text x="296" y="609" fill="#c03030">X</text>`;
```
